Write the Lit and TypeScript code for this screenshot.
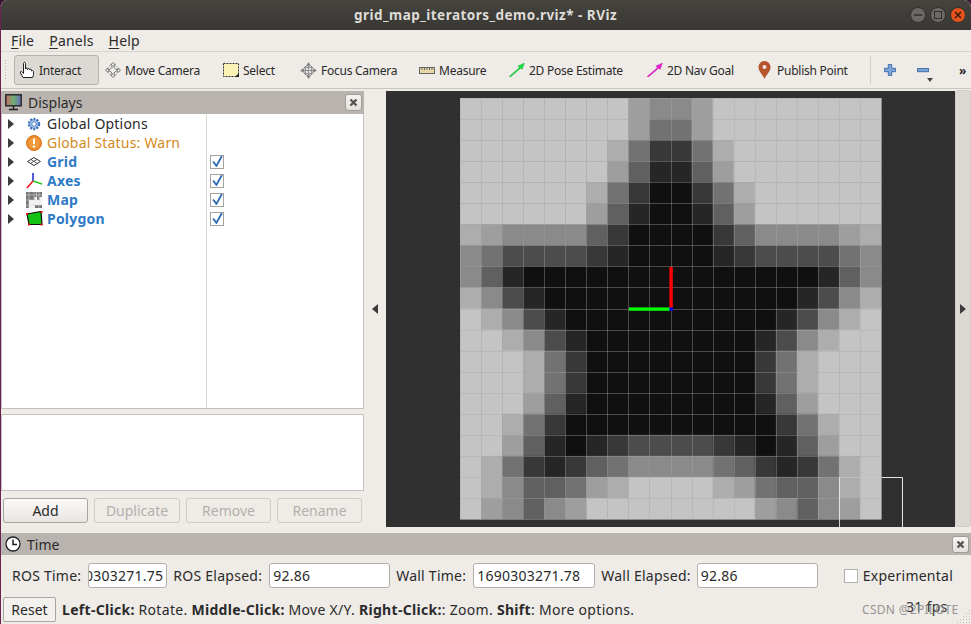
import { LitElement, html, css, svg } from "lit";
import { customElement } from "lit/decorators.js";

const G: Record<string, string> = {
  a: "#c4c4c4", b: "#adadad", c: "#9e9e9e", d: "#8a8a8a", e: "#727272",
  f: "#606060", g: "#4c4c4c", h: "#383838", i: "#262626", j: "#101010",
};
const HALF = [
  "aaaaaaaacd", "aaaaaaaace", "aaaaaaabeh", "aaaaaaacfi", "aaaaaabehj",
  "aaaaaacfij", "bcddddfhjj", "degggghijj", "dfijjjjjjj", "bdgijjjjjj",
  "abdgijjjjj", "aabdgijjjj", "aaabehjjjj", "aaabehjjjj", "aaacfijjjj",
  "aabehjjjjj", "aacfijihgg", "abehihfedd", "abdffecbaa", "acdfdcaaaa",
];
const CELL = 21.05;

const mapCells = () => HALF.flatMap((row, y) => {
  const full = row + row.split("").reverse().join("");
  return full.split("").map((k, x) =>
    svg`<rect x=${x * CELL} y=${y * CELL} width=${CELL + 0.5} height=${CELL + 0.5} fill=${G[k]} />`);
});
const gridLines = () => Array.from({ length: 21 }, (_, i) => {
  const p = Math.round(i * CELL) + 0.5;
  return svg`<path d="M${p} 0V421M0 ${p}H421" stroke="#a8a8a8" stroke-opacity=".38" fill="none" />`;
});

const arrowR = html`<svg width="6" height="10" viewBox="0 0 6 10"><path d="M0 0l6 5-6 5z" fill="#3c3c3c"/></svg>`;
const closeBtn = html`<span class="close"><svg width="9" height="9" viewBox="0 0 9 9"><path d="M1.5 1.5l6 6M7.5 1.5l-6 6" stroke="#555" stroke-width="2.4"/></svg></span>`;

const icons = {
  hand: html`<svg width="18" height="18" viewBox="0 0 18 18"><path d="M5 16.5l-2.5-4.5c-.8-1.5.8-2.2 1.7-1L5.5 12.5V2.5c0-1.6 2-1.6 2 0V8c0-1.3 2-1.3 2 0v.5c0-1.3 2-1.3 2 0V9c0-1.2 2-1.1 2 0l.2 1c.6-.8 1.8-.4 1.8.6v3c0 1-.5 1.6-1 2.9z" fill="#fff" stroke="#222" stroke-width="1"/></svg>`,
  move: html`<svg width="16" height="16" viewBox="0 0 16 16"><path d="M8 .5l2.5 2.5H9v2.5l2 2 0 0h2V6l2.500 2L13 10.500V9h-2L9 11v2h1.500L8 15.500 5.500 13H7v-2L5 9H3v1.500L.5 8 3 6v1.500h2l2-2V3H5.500z" fill="#eee" stroke="#666" stroke-width=".9"/><path d="M4 4h8v8H4z" fill="none" stroke="#888" stroke-width=".6" stroke-dasharray="1 1"/></svg>`,
  select: html`<svg width="16" height="14" viewBox="0 0 16 14"><rect x=".5" y=".5" width="15" height="13" fill="#fbf3b5" stroke="#333" stroke-dasharray="2 1"/><path d="M12 14l4-4v4z" fill="#222"/></svg>`,
  focus: html`<svg width="17" height="17" viewBox="0 0 17 17"><path d="M8.500 0l2 3h-4zM8.500 17l-2-3h4zM0 8.500l3-2v4zM17 8.500l-3 2v-4z" fill="#888"/><circle cx="8.500" cy="8.500" r="5" fill="#e4e4e4" stroke="#777"/><path d="M8.500 3v11M3 8.500h11M5.500 5.500v6M11.500 5.500v6M5.500 5.500h6M5.500 11.500h6" stroke="#777" stroke-width=".7"/></svg>`,
  ruler: html`<svg width="16" height="7" viewBox="0 0 16 7"><rect x=".5" y=".5" width="15" height="6" fill="#e6d9a6" stroke="#666"/><path d="M3 1v2M5.500 1v2M8 1v2M10.500 1v2M13 1v2" stroke="#666"/></svg>`,
  pose: (c: string, s: string) => html`<svg width="16" height="14" viewBox="0 0 17 15"><path d="M0 14.500L11 5l-1.500-1.800L16.500 0l-2.500 7-1.500-1.500L1.500 15z" fill=${c} stroke=${s} stroke-width=".3"/></svg>`,
  pin: html`<svg width="13" height="18" viewBox="0 0 13 18"><path d="M6.500 18C5 14 .5 10.500.5 6a6 6 0 0112 0c0 4.500-4.500 8-6 12z" fill="#b5532c"/><circle cx="6.500" cy="6" r="2" fill="#f0e5dc"/></svg>`,
  plus: html`<svg width="12" height="12" viewBox="0 0 14 14"><path d="M5 .5h4V5h4.500v4H9v4.500H5V9H.5V5H5z" fill="#7aa5dc" stroke="#35639f"/></svg>`,
  minus: html`<svg width="12" height="5" viewBox="0 0 14 6"><rect x=".5" y=".5" width="13" height="4" fill="#7aa5dc" stroke="#35639f"/></svg>`,
  monitor: html`<svg width="17" height="17" viewBox="0 0 17 17"><defs><linearGradient id="scr" x1="0" x2="1"><stop offset="0" stop-color="#c96a6a"/><stop offset=".5" stop-color="#6fb06f"/><stop offset="1" stop-color="#6a6ac0"/></linearGradient></defs><rect x=".8" y=".8" width="15.400" height="11" fill="url(#scr)" stroke="#222" stroke-width="1.400"/><path d="M8.500 12v3M4 15.500h9" stroke="#222" stroke-width="1.500"/></svg>`,
  gear: html`<svg width="14" height="14" viewBox="0 0 14 14"><circle cx="7" cy="7" r="5" fill="#a6c3ea" stroke="#3f74bd" stroke-width="2.400" stroke-dasharray="2 1.200"/><circle cx="7" cy="7" r="2.200" fill="#fff" stroke="#3f74bd" stroke-width=".8"/></svg>`,
  warn: html`<svg width="16" height="16" viewBox="0 0 16 16"><circle cx="8" cy="8" r="7.500" fill="#ee8a2a" stroke="#d67418"/><circle cx="8" cy="8" r="5.500" fill="#f19a3c"/><path d="M8 3.500v5.500" stroke="#fff" stroke-width="2"/><circle cx="8" cy="11.500" r="1.200" fill="#fff"/></svg>`,
  grid: html`<svg width="14" height="9" viewBox="0 0 14 9"><path d="M7 .5l6.500 4L7 8.500.5 4.500z" fill="#fff" stroke="#333"/><path d="M4 2.500l6.500 4M10 2.500L3.500 6.500" stroke="#333" stroke-width=".8"/></svg>`,
  axes: html`<svg width="17" height="16" viewBox="0 0 17 16"><path d="M7 8V0" stroke="#2222cc" stroke-width="1.500"/><path d="M7 8l9 3" stroke="#22cc22" stroke-width="1.500"/><path d="M7 8l-6 7" stroke="#ee1111" stroke-width="1.500"/></svg>`,
  map: html`<svg width="16" height="16" viewBox="0 0 16 16"><rect width="16" height="16" fill="#f4f4f4"/><path d="M0 0h5.500v5.500H0zM0 5.500h3v5.500H0zM5.500 0h5v5h-5zM11 0h5v5h-5zM3 5h5.500v3H3zM11 5h2.500v3H11zM9 13h7v3H9zM0 11h3v5H0z" fill="#777"/><path d="M0 3h16M0 8h16M0 13h16M3 0v16M8 0v16M13 0v16" stroke="#ddd" stroke-width=".5"/></svg>`,
  poly: html`<svg width="17" height="15" viewBox="0 0 17 15"><path d="M1 3l14-2.500L16 13.500H3z" fill="#13c313" stroke="#111" stroke-width="1.200"/><path d="M0 2h2v2H0zM14.500 0h2v2h-2zM14.500 12.500h2v2h-2zM2 12.500h2v2H2z" fill="#e11"/></svg>`,
  clock: html`<svg width="16" height="16" viewBox="0 0 16 16"><circle cx="8" cy="8" r="7" fill="#fff" stroke="#222" stroke-width="1.300"/><path d="M8 3.500V8.500H12" fill="none" stroke="#222" stroke-width="1.500"/></svg>`,
  check: html`<svg width="11" height="11" viewBox="0 0 10 10"><path d="M1 5l3 4 5-9" fill="none" stroke="#2f6db5" stroke-width="1.700"/></svg>`,
};

const tools = [
  { i: icons.hand, t: "Interact", cls: "on" },
  { i: icons.move, t: "Move Camera" },
  { i: icons.select, t: "Select" },
  { i: icons.focus, t: "Focus Camera" },
  { i: icons.ruler, t: "Measure" },
  { i: icons.pose("#16e53e", "#0a7a20"), t: "2D Pose Estimate" },
  { i: icons.pose("#f01bd8", "#8a0f7c"), t: "2D Nav Goal" },
  { i: icons.pin, t: "Publish Point", cls: "pin" },
];

const rows = [
  { i: icons.gear, t: "Global Options", cls: "" },
  { i: icons.warn, t: "Global Status: Warn", cls: "warn" },
  { i: icons.grid, t: "Grid", cls: "blue", c: true },
  { i: icons.axes, t: "Axes", cls: "blue", c: true },
  { i: icons.map, t: "Map", cls: "blue", c: true },
  { i: icons.poly, t: "Polygon", cls: "blue", c: true },
];

@customElement("app-root")
export class AppRoot extends LitElement {
  static styles = css`
    :host { display: block; width: 971px; height: 624px; overflow: hidden; font-family: "Noto Sans", sans-serif; font-size: 14px; color: #2a2a2a; background: #3a1030; }
    .win { position: relative; width: 971px; height: 624px; background: #efebe7; display: flex; flex-direction: column; border-radius: 7px 7px 0 0; overflow: hidden; border-left: 1px solid #6a2350; box-sizing: border-box; }
    .title { height: 30px; flex: none; background: linear-gradient(#46443f, #383733); color: #dedcd7; display: flex; align-items: center; justify-content: center; font-weight: 700; font-size: 13.5px; padding-right: 1px; position: relative; letter-spacing: .48px; }
    .wbtns { position: absolute; right: 5px; top: 7px; display: flex; gap: 4px; }
    .wbtn { width: 16px; height: 16px; border-radius: 50%; background: #6a6964; border: 1px solid #33322e; box-sizing: border-box; display: grid; place-items: center; }
    .wbtn.x { background: #e6531f; }
    .menu { height: 22px; flex: none; display: flex; padding-left: 10px; gap: 15px; align-items: center; font-size: 14px; letter-spacing: .2px; border-bottom: 1px solid #d8d4cf; box-sizing: border-box; }
    .menu u { text-underline-offset: 2px; }
    .toolbar { height: 37px; flex: none; display: grid; align-items: center; grid-template-columns: 4px 85px 112px 71px 113px 84px 132px 105px 106px 1px 26px 28px 1fr; column-gap: 6px; padding-left: 3px; box-sizing: border-box; border-bottom: 1px solid #c9c5c0; font-size: 12px; letter-spacing: -.25px; }
    .grip { width: 4px; height: 22px; background-image: radial-gradient(#b5b1ac 0.7px, transparent 0.8px); background-size: 3px 3px; }
    .tool { display: flex; align-items: center; gap: 4px; height: 30px; box-sizing: border-box; white-space: nowrap; }
    .tool.on { background: #dcd8d3; border: 1px solid #b6b2ad; border-radius: 3px; padding-left: 3px; gap: 3px; }
    .tool.pin { gap: 6px; }
    .tsep { width: 1px; height: 28px; background: #d3cfca; }
    .ticon { display: flex; justify-content: center; position: relative; }
    .caret { position: absolute; right: 4px; top: 10px; border: 3px solid transparent; border-top: 4px solid #444; }
    .more { font-weight: 700; font-size: 12px; text-align: right; padding-right: 5px; }
    .main { height: 438px; flex: none; display: flex; padding-top: 2px; box-sizing: border-box; }
    .left { width: 363px; flex: none; display: flex; flex-direction: column; }
    .ptitle { height: 23px; flex: none; background: #b9b4af; display: flex; align-items: center; gap: 6px; padding: 0 2px 0 4px; font-size: 14px; }
    .ptitle .name { flex: 1; }
    .close { width: 17px; height: 17px; box-sizing: border-box; background: linear-gradient(#f7f5f3, #e4e0db); border: 1px solid #a09c97; border-radius: 3px; display: grid; place-items: center; }
    .tree { height: 295px; flex: none; background: #fff; border: 1px solid #c4c0bb; border-top: none; box-sizing: border-box; display: grid; grid-template-columns: 205px 1fr; align-content: start; position: relative; }
    .divider { position: absolute; left: 204px; top: 0; bottom: 0; width: 1px; background: #d8d6d3; }
    .cellname { height: 19px; display: flex; align-items: center; padding-left: 6px; font-size: 14px; white-space: nowrap; letter-spacing: .2px; }
    .cellname .ico { width: 22px; margin-left: 9px; margin-right: 2px; display: flex; justify-content: center; }
    .warn { color: #d68a1c; }
    .blue { color: #2f7ac6; font-weight: 700; }
    .cellcheck { height: 19px; display: flex; align-items: center; padding-left: 3px; }
    .cb { width: 14px; height: 14px; box-sizing: border-box; background: #fff; border: 1px solid #a5a19c; display: grid; place-items: center; }
    .hsplit { height: 5px; flex: none; display: flex; justify-content: center; align-items: center; }
    .dots { width: 9px; height: 2px; background-image: radial-gradient(#a5a19c 0.6px, transparent 0.7px); background-size: 2px 2px; }
    .desc { height: 77px; flex: none; background: #fff; border: 1px solid #c4c0bb; box-sizing: border-box; }
    .btns { display: grid; grid-template-columns: 85px 86px 85px 85px; gap: 6px; padding: 7px 0 0 2px; font-size: 14px; }
    .btn { height: 25px; box-sizing: border-box; border: 1px solid #a9a5a0; border-radius: 3px; background: linear-gradient(#fbfaf9, #e8e5e1); display: grid; place-items: center; }
    .btn.dis { color: #b3b0ac; border-color: #cfcbc6; background: #efebe7; }
    .vsplit { width: 22px; flex: none; display: flex; align-items: center; justify-content: center; }
    .view { flex: none; width: 569px; height: 436px; background: #303030; position: relative; overflow: hidden; }
    .view svg { display: block; }
    .rail { flex: 1; display: flex; align-items: center; justify-content: center; background: #dcd8d3; border-radius: 3px; margin-top: -1px; border: 1px solid #d0ccc7; }
    .hgrip { height: 6px; flex: none; display: flex; justify-content: flex-end; padding-right: 476px; align-items: center; }
    .tpanel { height: 22px; flex: none; background: #b9b4af; display: flex; align-items: center; gap: 6px; padding: 0 2px 0 4px; font-size: 14px; }
    .tpanel .name { flex: 1; }
    .trow { flex: none; height: 40px; display: flex; align-items: center; padding: 1px 0 0 11px; white-space: nowrap; font-size: 14px; letter-spacing: .25px; box-sizing: border-box; }
    .lbl { flex: none; }
    .inp { flex: none; height: 25px; box-sizing: border-box; background: #fff; border: 1px solid #b3afaa; border-radius: 3px; display: flex; align-items: center; overflow: hidden; padding: 0 3px; font-size: 14px; }
    .inp.clip { justify-content: flex-end; width: 79px; margin: 0 6px 0 7px; }
    .w1 { width: 121px; margin: 0 6px 0 7px; }
    .w2 { width: 122px; margin: 0 6px 0 7px; }
    .w3 { width: 121px; margin: 0 26px 0 6px; }
    .expcb { width: 14px; height: 14px; box-sizing: border-box; background: #fff; border: 1px solid #b3afaa; margin-right: 5px; }
    .bar { height: 29px; flex: none; display: flex; align-items: center; padding-left: 2px; gap: 6px; font-size: 14px; letter-spacing: .3px; white-space: nowrap; }
    .reset { height: 25px; width: 53px; box-sizing: border-box; border: 1px solid #a9a5a0; border-radius: 2px; display: grid; place-items: center; background: #f3f1ee; flex: none; letter-spacing: 0; }
    .fps { position: absolute; left: 905px; top: 597px; font-size: 14px; color: #333; letter-spacing: .3px; }
    .mark { position: absolute; left: 861px; top: 601px; font-size: 12px; color: #8d8b88; letter-spacing: .3px; opacity: .9; }
    .sizegrip { position: absolute; right: 1px; bottom: 1px; width: 14px; height: 14px; background-image: radial-gradient(#c2beb9 0.7px, transparent 0.8px); background-size: 3px 3px; clip-path: polygon(100% 0, 100% 100%, 0 100%); }
    b { font-weight: 700; }
  `;

  render() {
    return html`<div class="win">
      <div class="title">grid_map_iterators_demo.rviz* - RViz
        <div class="wbtns">
          <span class="wbtn"><svg width="8" height="8" viewBox="0 0 8 8"><path d="M0 4h8" stroke="#2f2e2a" stroke-width="1.400"/></svg></span>
          <span class="wbtn"><svg width="8" height="8" viewBox="0 0 8 8"><rect x=".5" y=".5" width="7" height="7" fill="none" stroke="#2f2e2a"/></svg></span>
          <span class="wbtn x"><svg width="8" height="8" viewBox="0 0 8 8"><path d="M1 1l6 6M7 1L1 7" stroke="#3a1a0c" stroke-width="1.500"/></svg></span>
        </div>
      </div>
      <div class="menu"><span><u>F</u>ile</span><span><u>P</u>anels</span><span><u>H</u>elp</span></div>
      <div class="toolbar">
        <span class="grip"></span>
        ${tools.map((t) => html`<div class="tool ${t.cls ?? ""}">${t.i}<span>${t.t}</span></div>`)}
        <span class="tsep"></span>
        <span class="ticon">${icons.plus}</span>
        <span class="ticon">${icons.minus}<span class="caret"></span></span>
        <span class="more">»</span>
      </div>
      <div class="main">
        <div class="left">
          <div class="ptitle">${icons.monitor}<span class="name">Displays</span>${closeBtn}</div>
          <div class="tree">
            <span class="divider"></span>
            ${rows.map((r) => html`
              <div class="cellname">${arrowR}<span class="ico">${r.i}</span><span class=${r.cls}>${r.t}</span></div>
              <div class="cellcheck">${r.c ? html`<span class="cb">${icons.check}</span>` : ""}</div>`)}
          </div>
          <div class="hsplit"><span class="dots"></span></div>
          <div class="desc"></div>
          <div class="btns">
            <span class="btn">Add</span><span class="btn dis">Duplicate</span><span class="btn dis">Remove</span><span class="btn dis">Rename</span>
          </div>
        </div>
        <div class="vsplit"><svg width="6" height="10" viewBox="0 0 6 10"><path d="M6 0L0 5l6 5z" fill="#3c3c3c"/></svg></div>
        <div class="view">
          <svg width="569" height="436" viewBox="0 0 569 436">
            <g transform="translate(74 7)">${mapCells()}${gridLines()}</g>
            <path d="M453.500 436V386.500" fill="none" stroke="#eee" stroke-opacity=".85"/>
            <path d="M453.500 386.500H496" fill="none" stroke="#eee" stroke-opacity=".3"/>
            <path d="M496 386.500H516.500V436" fill="none" stroke="#eee" stroke-opacity=".95"/>
            <rect x="283.400" y="176" width="3.400" height="41" fill="#f00"/>
            <rect x="243" y="216.400" width="41" height="3.400" fill="#0f0"/>
            <rect x="283.400" y="216.400" width="3.400" height="3.400" fill="#00f"/>
          </svg>
        </div>
        <div class="rail"><svg width="6" height="10" viewBox="0 0 6 10"><path d="M0 0l6 5-6 5z" fill="#3c3c3c"/></svg></div>
      </div>
      <div class="hgrip"><span class="dots"></span></div>
      <div class="tpanel">${icons.clock}<span class="name">Time</span>${closeBtn}</div>
      <div class="trow">
        <span class="lbl">ROS Time:</span><span class="inp clip">1690303271.75</span>
        <span class="lbl">ROS Elapsed:</span><span class="inp w1">92.86</span>
        <span class="lbl">Wall Time:</span><span class="inp w2">1690303271.78</span>
        <span class="lbl">Wall Elapsed:</span><span class="inp w3">92.86</span>
        <span class="expcb"></span><span class="lbl">Experimental</span>
      </div>
      <div class="bar"><span class="reset">Reset</span><span><b>Left-Click:</b> Rotate. <b>Middle-Click:</b> Move X/Y. <b>Right-Click:</b>: Zoom. <b>Shift</b>: More options.</span></div>
      <span class="fps">31 fps</span>
      <span class="mark">CSDN @2PILOTE</span>
      <span class="sizegrip"></span>
    </div>`;
  }
}
